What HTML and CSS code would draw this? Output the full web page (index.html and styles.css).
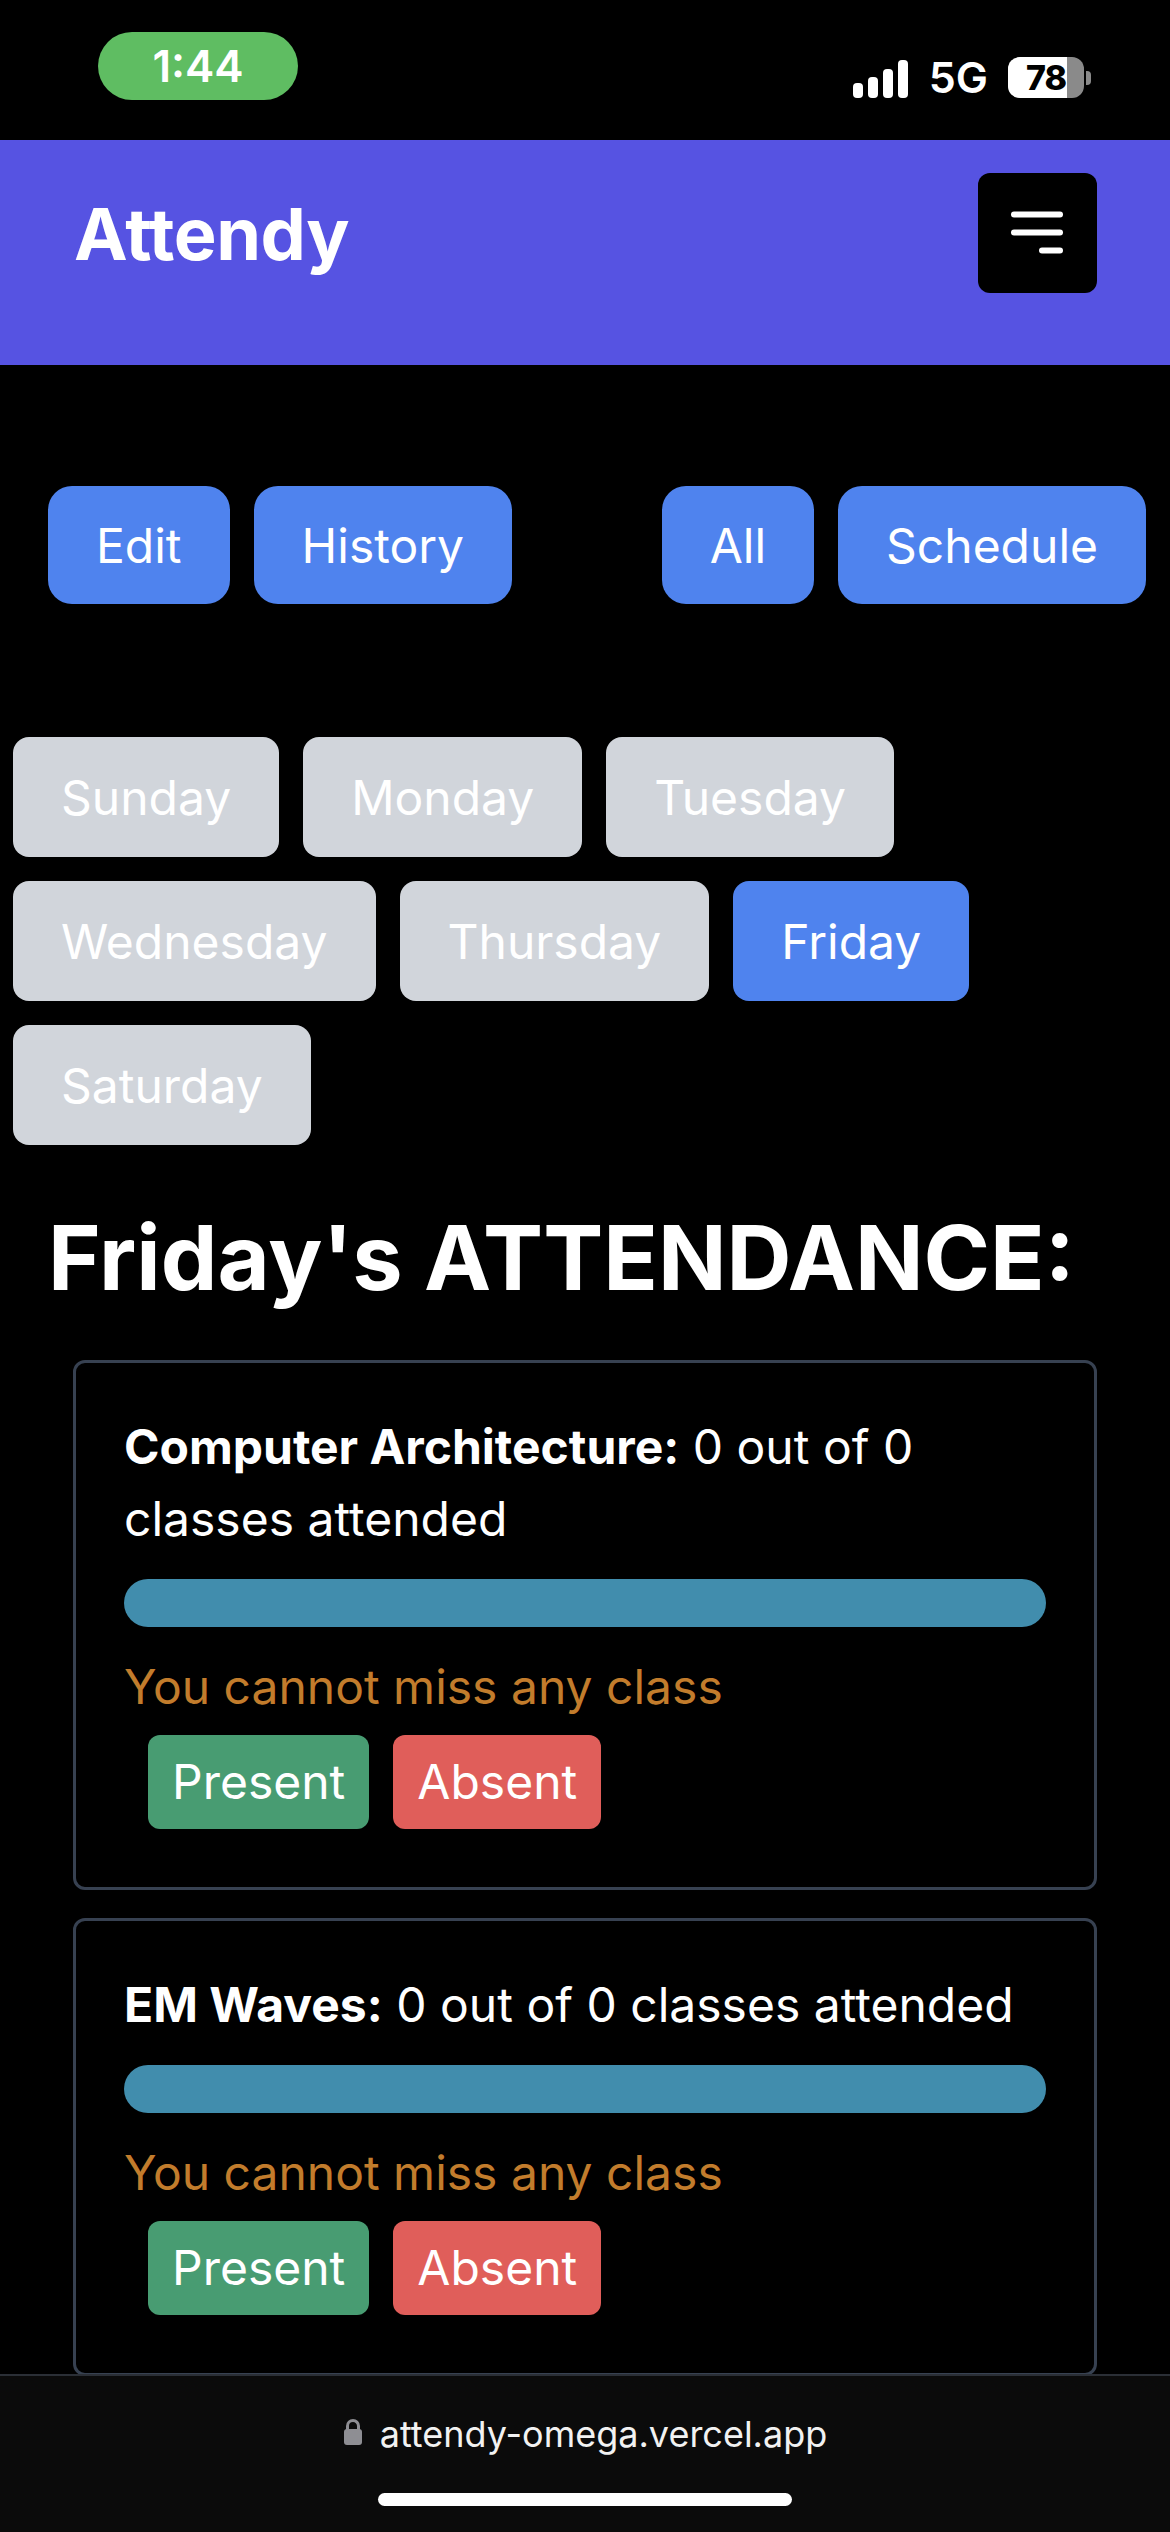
FILE: index.html
```html
<!DOCTYPE html>
<html lang="en">
<head>
<meta charset="utf-8">
<title>Attendy</title>
<link rel="stylesheet" href="styles.css">
</head>
<body>
<div class="status">
  <div class="time-pill">1:44</div>
  <div class="status-right">
    <svg class="signal" width="56" height="38" viewBox="0 0 56 38">
      <rect x="0" y="23" width="10" height="15" rx="4" fill="#fff"/>
      <rect x="15" y="17" width="10" height="21" rx="4" fill="#fff"/>
      <rect x="30" y="9" width="10" height="29" rx="4" fill="#fff"/>
      <rect x="45" y="0" width="10" height="38" rx="4" fill="#fff"/>
    </svg>
    <span class="net">5G</span>
    <div class="battery">
      <div class="battery-body"><span class="battery-fill"></span><span class="battery-num">78</span></div>
      <span class="battery-tip"></span>
    </div>
  </div>
</div>

<header class="navbar">
  <div class="brand">Attendy</div>
  <button class="menu-btn" aria-label="menu">
    <svg width="119" height="120" viewBox="0 0 119 120">
      <line x1="36" y1="41.5" x2="82" y2="41.5" stroke="#fff" stroke-width="6" stroke-linecap="round"/>
      <line x1="36" y1="59.5" x2="82" y2="59.5" stroke="#fff" stroke-width="6" stroke-linecap="round"/>
      <line x1="64" y1="77.5" x2="82" y2="77.5" stroke="#fff" stroke-width="6" stroke-linecap="round"/>
    </svg>
  </button>
</header>

<div class="actions">
  <div class="group">
    <button class="btn-blue">Edit</button>
    <button class="btn-blue">History</button>
  </div>
  <div class="group">
    <button class="btn-blue">All</button>
    <button class="btn-blue">Schedule</button>
  </div>
</div>

<div class="days">
  <button class="day">Sunday</button>
  <button class="day">Monday</button>
  <button class="day">Tuesday</button>
  <button class="day">Wednesday</button>
  <button class="day">Thursday</button>
  <button class="day active">Friday</button>
  <button class="day">Saturday</button>
</div>

<h1 class="title">Friday's ATTENDANCE:</h1>

<div class="cards">
  <div class="card">
    <p class="subject"><b>Computer Architecture:</b> 0 out of 0 classes attended</p>
    <div class="bar"></div>
    <p class="warn">You cannot miss any class</p>
    <div class="marks">
      <button class="present">Present</button>
      <button class="absent">Absent</button>
    </div>
  </div>
  <div class="card">
    <p class="subject"><b>EM Waves:</b> 0 out of 0 classes attended</p>
    <div class="bar"></div>
    <p class="warn">You cannot miss any class</p>
    <div class="marks">
      <button class="present">Present</button>
      <button class="absent">Absent</button>
    </div>
  </div>
</div>

<div class="safari">
  <div class="url">
    <svg class="lock" width="20" height="28" viewBox="0 0 20 28">
      <path d="M4.5 12 V8 a5.5 5.5 0 0 1 11 0 V12" fill="none" stroke="#8e8e93" stroke-width="3"/>
      <rect x="1" y="11" width="18" height="16" rx="3" fill="#8e8e93"/>
    </svg>
    <span>attendy-omega.vercel.app</span>
  </div>
  <div class="home-indicator"></div>
</div>
</body>
</html>
```

FILE: styles.css
```css
* { box-sizing: border-box; }
html, body {
  margin: 0;
  padding: 0;
  background: #000;
}
body {
  width: 1170px;
  height: 2532px;
  overflow: hidden;
  position: relative;
  font-family: Inter, "Noto Sans", "Liberation Sans", sans-serif;
  color: #fff;
}
button {
  font-family: inherit;
  border: none;
  cursor: pointer;
}
p { margin: 0; }

/* status bar */
.status {
  height: 140px;
  display: flex;
  justify-content: space-between;
  align-items: flex-start;
  padding: 0 79px 0 98px;
}
.time-pill {
  margin-top: 32px;
  width: 200px;
  height: 68px;
  border-radius: 34px;
  background: #5fbd62;
  color: #fff;
  font-size: 44px;
  font-weight: 600;
  line-height: 68px;
  text-align: center;
}
.status-right {
  margin-top: 57px;
  height: 41px;
  display: flex;
  align-items: center;
}
.signal { margin-right: 20px; margin-top: 2px; }
.net {
  font-size: 43px;
  font-weight: 600;
  line-height: 41px;
  margin-right: 20px;
}
.battery {
  display: flex;
  align-items: center;
}
.battery-body {
  position: relative;
  width: 76px;
  height: 41px;
  border-radius: 12px;
  background: #8a8a8a;
  overflow: hidden;
}
.battery-fill {
  position: absolute;
  left: 0; top: 0; bottom: 0;
  width: 78%;
  background: #fff;
}
.battery-num {
  position: relative;
  display: block;
  text-align: center;
  color: #000;
  font-size: 34px;
  font-weight: 800;
  line-height: 41px;
  letter-spacing: -1px;
}
.battery-tip {
  width: 5px;
  height: 14px;
  margin-left: 2px;
  border-radius: 0 4px 4px 0;
  background: #8a8a8a;
}

/* navbar */
.navbar {
  height: 225px;
  background: #5653e2;
  display: flex;
  justify-content: space-between;
  align-items: flex-start;
  padding: 33px 73px 0 74px;
}
.brand {
  margin-top: 25px;
  font-size: 72px;
  font-weight: 700;
  line-height: 72px;
  letter-spacing: -0.5px;
}
.menu-btn {
  width: 119px;
  height: 120px;
  padding: 0;
  background: #000;
  border-radius: 12px;
  display: flex;
}

/* action buttons */
.actions {
  margin-top: 121px;
  display: flex;
  justify-content: space-between;
  padding: 0 24px 0 48px;
}
.group {
  display: flex;
  gap: 24px;
}
.btn-blue {
  height: 118px;
  padding: 0 48px;
  background: #4f83ee;
  color: #fff;
  font-size: 48px;
  border-radius: 24px;
}

/* days */
.days {
  margin-top: 121px;
  display: flex;
  flex-wrap: wrap;
  padding: 0 1px;
}
.day {
  margin: 12px;
  height: 120px;
  padding: 0 48px;
  background: #d1d5db;
  color: #fff;
  font-size: 48px;
  border-radius: 16px;
}
.day.active { background: #4f83ee; }

/* title */
.title {
  margin: 47px 0 0;
  padding-left: 48px;
  font-size: 90px;
  line-height: 108px;
  font-weight: 700;
  letter-spacing: 0;
}

/* cards */
.cards {
  margin-top: 48px;
  padding: 0 73px;
  display: flex;
  flex-direction: column;
  gap: 28px;
}
.card {
  border: 3px solid #374151;
  border-radius: 12px;
  padding: 48px 48px 48px;
}
.subject {
  font-size: 48px;
  line-height: 72px;
}
.subject b { font-weight: 700; }
.bar {
  margin-top: 24px;
  height: 48px;
  border-radius: 24px;
  background: #418dad;
}
.warn {
  margin-top: 24px;
  font-size: 48px;
  line-height: 72px;
  color: #c27c2c;
}
.marks {
  display: flex;
  margin: 12px 0 10px;
}
.marks button {
  margin-left: 24px;
  padding: 11px 24px;
  font-size: 48px;
  line-height: 72px;
  color: #fff;
  border-radius: 12px;
}
.present { background: #489c72; }
.absent { background: #e05e5a; }

/* safari bottom bar */
.safari {
  position: absolute;
  left: 0;
  right: 0;
  bottom: 0;
  height: 158px;
  background: #0b0b0b;
  border-top: 2px solid #2b2f36;
  display: flex;
  flex-direction: column;
  align-items: center;
}
.url {
  margin-top: 36px;
  display: flex;
  align-items: center;
  gap: 17px;
  height: 44px;
  font-size: 36px;
  color: #f2f2f2;
}
.lock { margin-top: -4px; }
.home-indicator {
  margin-top: 37px;
  width: 414px;
  height: 13px;
  border-radius: 7px;
  background: #fff;
}
```
